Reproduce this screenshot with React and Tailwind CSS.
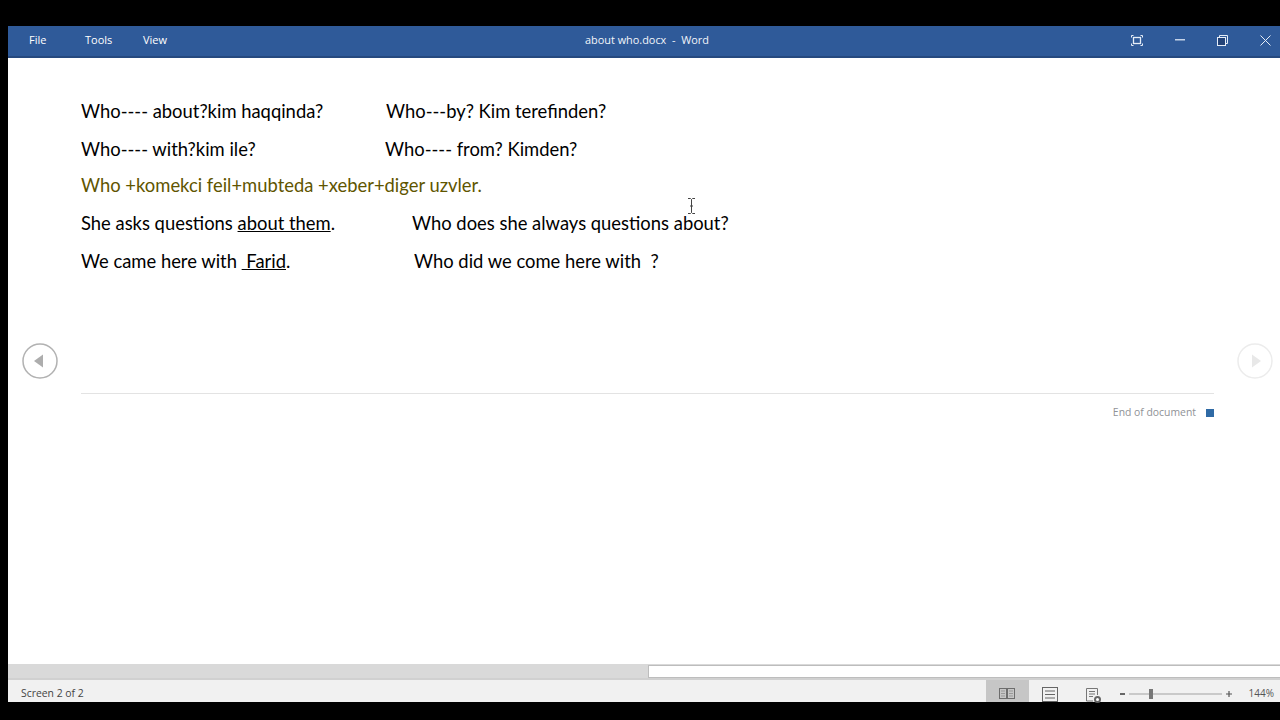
const ui = { fontFamily: '"Open Sans", "Noto Sans", sans-serif' };

function Row({ left, right, pad, className = "h-[38px]" }) {
  return (
    <div className={`flex items-center text-black ${className}`}>
      <span className="whitespace-pre">{left}</span>
      {right ? <span className="whitespace-pre absolute" style={{ left: pad }}>{right}</span> : null}
    </div>
  );
}

export default function App() {
  return (
    <div className="w-[1280px] h-[720px] bg-black overflow-hidden pt-[26px] pb-[18px] pl-2 flex flex-col">
      <header className="h-[32px] shrink-0 bg-[#2f5a99] border-b-2 border-[#26497f] flex items-center text-white relative" style={ui}>
        <nav className="flex text-[11px] leading-none mb-[3px]">
          <span className="ml-[21px] w-[56px]">File</span>
          <span className="w-[58px]">Tools</span>
          <span>View</span>
        </nav>
        <div className="absolute left-[577px] mb-[2px] text-[10.900px] whitespace-pre text-[#f2f5fa]">about who.docx  -  Word</div>
        <div className="absolute right-0 top-0 h-full pb-[2px] flex items-center text-[#e6edf7]">
          <svg className="absolute right-[137px]" width="12" height="11" viewBox="0 0 12 11" fill="none" stroke="currentColor">
            <rect x="2.500" y="2.500" width="7" height="6" strokeWidth="1.300" />
            <path d="M.5 2.500V.5H2.500M9.500.5h2V2.500M11.500 8.500v2H9.500M2.500 10.500H.5v-2" />
          </svg>
          <svg className="absolute right-[95px]" width="10" height="2" viewBox="0 0 10 2"><rect width="10" height="1.500" fill="#c5d3e8" /></svg>
          <svg className="absolute right-[52px]" width="11" height="11" viewBox="0 0 11 11" fill="none" stroke="currentColor">
            <rect x=".5" y="2.500" width="8" height="8" fill="#234378" />
            <path d="M2.500 2.500V.5h8v8H8.500" />
          </svg>
          <svg className="absolute right-[9px]" width="11" height="11" viewBox="0 0 11 11" fill="none" stroke="currentColor"><path d="M.5.5l10 10M10.500.5l-10 10" /></svg>
        </div>
      </header>

      <main className="flex-1 bg-white relative pt-[35px] pl-[73px] pr-[66px] text-[18.400px]" style={{ fontFamily: 'Lato, "Liberation Sans", sans-serif' }}>
        <Row left="Who---- about?kim haqqinda?" right="Who---by? Kim terefinden?" pad={378} />
        <Row left="Who---- with?kim ile?" right="Who---- from? Kimden?" pad={377} />
        <div className="h-[36px] pb-[2px] flex items-center text-[#5f5500] whitespace-pre">Who +komekci feil+mubteda +xeber+diger uzvler.</div>
        <Row left={<>She asks questions <span className="underline">about them</span>.</>} right="Who does she always questions about?" pad={404} />
        <Row left={<>We came here with <span className="underline"> Farid</span>.</>} right="Who did we come here with  ?" pad={406} />

        <hr className="mt-[112px] border-0 h-px bg-[#e3e3e3]" />
        <div className="mt-[11px] flex items-center justify-end text-[10.400px] text-[#8f9296]" style={ui}>
          <span>End of document</span>
          <span className="ml-[10px] w-2 h-2 bg-[#2f6aa5]" />
        </div>

        <svg className="absolute left-[14px] top-[285px]" width="36" height="36" viewBox="0 0 36 36" fill="none">
          <circle cx="18" cy="18" r="17" stroke="#b2b2b2" strokeWidth="1.500" />
          <path d="M12 18l9-6.500v13z" fill="#adadad" />
        </svg>
        <svg className="absolute left-[1229px] top-[285px]" width="36" height="36" viewBox="0 0 36 36" fill="none">
          <circle cx="18" cy="18" r="17" stroke="#ececec" strokeWidth="1.500" />
          <path d="M24 18l-9-6.500v13z" fill="#e8e8e8" />
        </svg>
        <svg className="absolute left-[679px] top-[140px]" width="9" height="16" viewBox="0 0 9 16" fill="none" stroke="#444" strokeWidth="1">
          <path d="M1 .5h2.500L4.500 1.500 5.500.5H8M4.500 1.500v13M1 15.500h2.500l1-1 1 1H8M3 8h3" />
        </svg>
      </main>

      <div className="h-[16px] shrink-0 bg-[#d9d9d9] border-b-2 border-[#d0d0d0] flex justify-end">
        <div className="w-[632px] h-[13px] mt-px bg-white border border-[#bdbdbd] border-r-0" />
      </div>

      <footer className="h-[22px] shrink-0 bg-[#f1f1f1] flex items-center pt-[5px] text-[#444] text-[10.400px] relative" style={ui}>
        <span className="ml-[13px]">Screen 2 of 2</span>
        <div className="absolute left-[978px] top-0 w-[43px] h-full pt-[5px] pr-[2px] bg-[#c6c6c6] flex items-center justify-center">
          <svg width="16" height="13" viewBox="0 0 16 13" fill="none" stroke="#6d6d6d">
            <rect x=".5" y="1.500" width="7" height="10" /><rect x="8.500" y="1.500" width="7" height="10" />
            <path d="M2 4h4M2 6.500h4M2 9h4M10 4h4M10 6.500h4M10 9h4" stroke="#999" />
          </svg>
        </div>
        <svg className="absolute left-[1034px] top-[7px]" width="16" height="15" viewBox="0 0 16 15" fill="none" stroke="#666">
          <rect x=".5" y=".5" width="15" height="14" /><path d="M3 4h10M3 7.500h10M3 11h10" />
        </svg>
        <svg className="absolute left-[1078px] top-[8px]" width="16" height="16" viewBox="0 0 16 16" fill="none" stroke="#777">
          <path d="M.5 13V.5h11V7M.5 13H7" /><path d="M3 3.500h6M3 6h6M3 8.500h4" />
          <circle cx="11.500" cy="11.500" r="3.500" fill="#666" stroke="none" />
          <circle cx="11.500" cy="11.500" r="1.500" fill="#fff" stroke="none" />
        </svg>
        <div className="absolute left-[1112px] top-[3px] h-full flex items-center w-[115px]">
          <span className="w-[5px] h-[2px] bg-[#666]" />
          <span className="ml-[4px] w-[93px] h-[2px] bg-[#c9c9c9] relative">
            <span className="absolute left-[20px] -top-[4px] w-[4px] h-[10px] bg-[#777]" />
          </span>
          <svg className="ml-[4px]" width="6" height="6" viewBox="0 0 6 6" fill="#555"><path d="M2.400 0h1.200v2.400H6v1.200H3.600V6H2.400V3.600H0V2.400h2.400z" /></svg>
        </div>
        <span className="absolute right-[6px] text-[10px] text-[#555]">144%</span>
      </footer>
    </div>
  );
}
